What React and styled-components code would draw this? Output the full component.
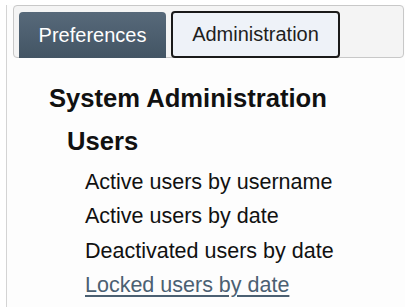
import styled, { createGlobalStyle } from "styled-components";

const GlobalStyle = createGlobalStyle`
  html, body {
    margin: 0;
    padding: 0;
    background: #ffffff;
    font-family: "Liberation Sans", Arial, sans-serif;
    overflow: hidden;
  }
`;

const Panel = styled.div`
  box-sizing: border-box;
  margin: 5px 0 0 6px;
  padding: 0 1px 0 6px;
  border-left: 1px solid #d4d4d4;
  background: #fdfdfd;
  height: 302px;
`;

const TabBar = styled.div`
  display: flex;
  align-items: flex-end;
  gap: 5px;
  height: 51px;
  padding: 0 0 0 5px;
  border: 1px solid #c8c8c8;
  border-radius: 4px;
  background: #f4f4f4;
`;

const Tab = styled.div`
  box-sizing: border-box;
  margin-bottom: -1px;
  border-radius: 4px 4px 0 0;
  font-size: 20px;
  white-space: nowrap;
  cursor: pointer;
  ${({ $active }) =>
    $active
      ? `
    width: 147px;
    height: 46px;
    line-height: 46px;
    text-align: center;
    color: #ffffff;
    background: linear-gradient(#57697a, #435564);
  `
      : `
    width: 169px;
    height: 47px;
    line-height: 43px;
    text-align: center;
    color: #1e1e1e;
    background: #eef2f8;
    border: 2px solid #1a1a1a;
    border-radius: 4px;
  `}
`;

const Content = styled.div`
  padding: 19px 0 0 36px;
`;

const Heading = styled.div`
  font-size: 25.6px;
  font-weight: bold;
  line-height: 43px;
  color: #111;
  padding-left: ${({ $indent }) => $indent || 0}px;
`;

const List = styled.ul`
  list-style: none;
  margin: 2px 0 0 0;
  padding: 0 0 0 36px;
`;

const Item = styled.li`
  font-size: 21.5px;
  line-height: 34.3px;
  color: #111;
`;

const ItemLink = styled.a`
  color: #4b6072;
  text-decoration: underline;
  text-underline-offset: 3px;
  cursor: pointer;
`;

const items = [
  { label: "Active users by username" },
  { label: "Active users by date" },
  { label: "Deactivated users by date" },
  { label: "Locked users by date", link: true },
];

export default function App() {
  return (
    <>
      <GlobalStyle />
      <Panel>
        <TabBar>
          <Tab $active>Preferences</Tab>
          <Tab>Administration</Tab>
        </TabBar>
        <Content>
          <Heading>System Administration</Heading>
          <Heading $indent={18}>Users</Heading>
          <List>
            {items.map((it) => (
              <Item key={it.label}>
                {it.link ? <ItemLink>{it.label}</ItemLink> : it.label}
              </Item>
            ))}
          </List>
        </Content>
      </Panel>
    </>
  );
}
